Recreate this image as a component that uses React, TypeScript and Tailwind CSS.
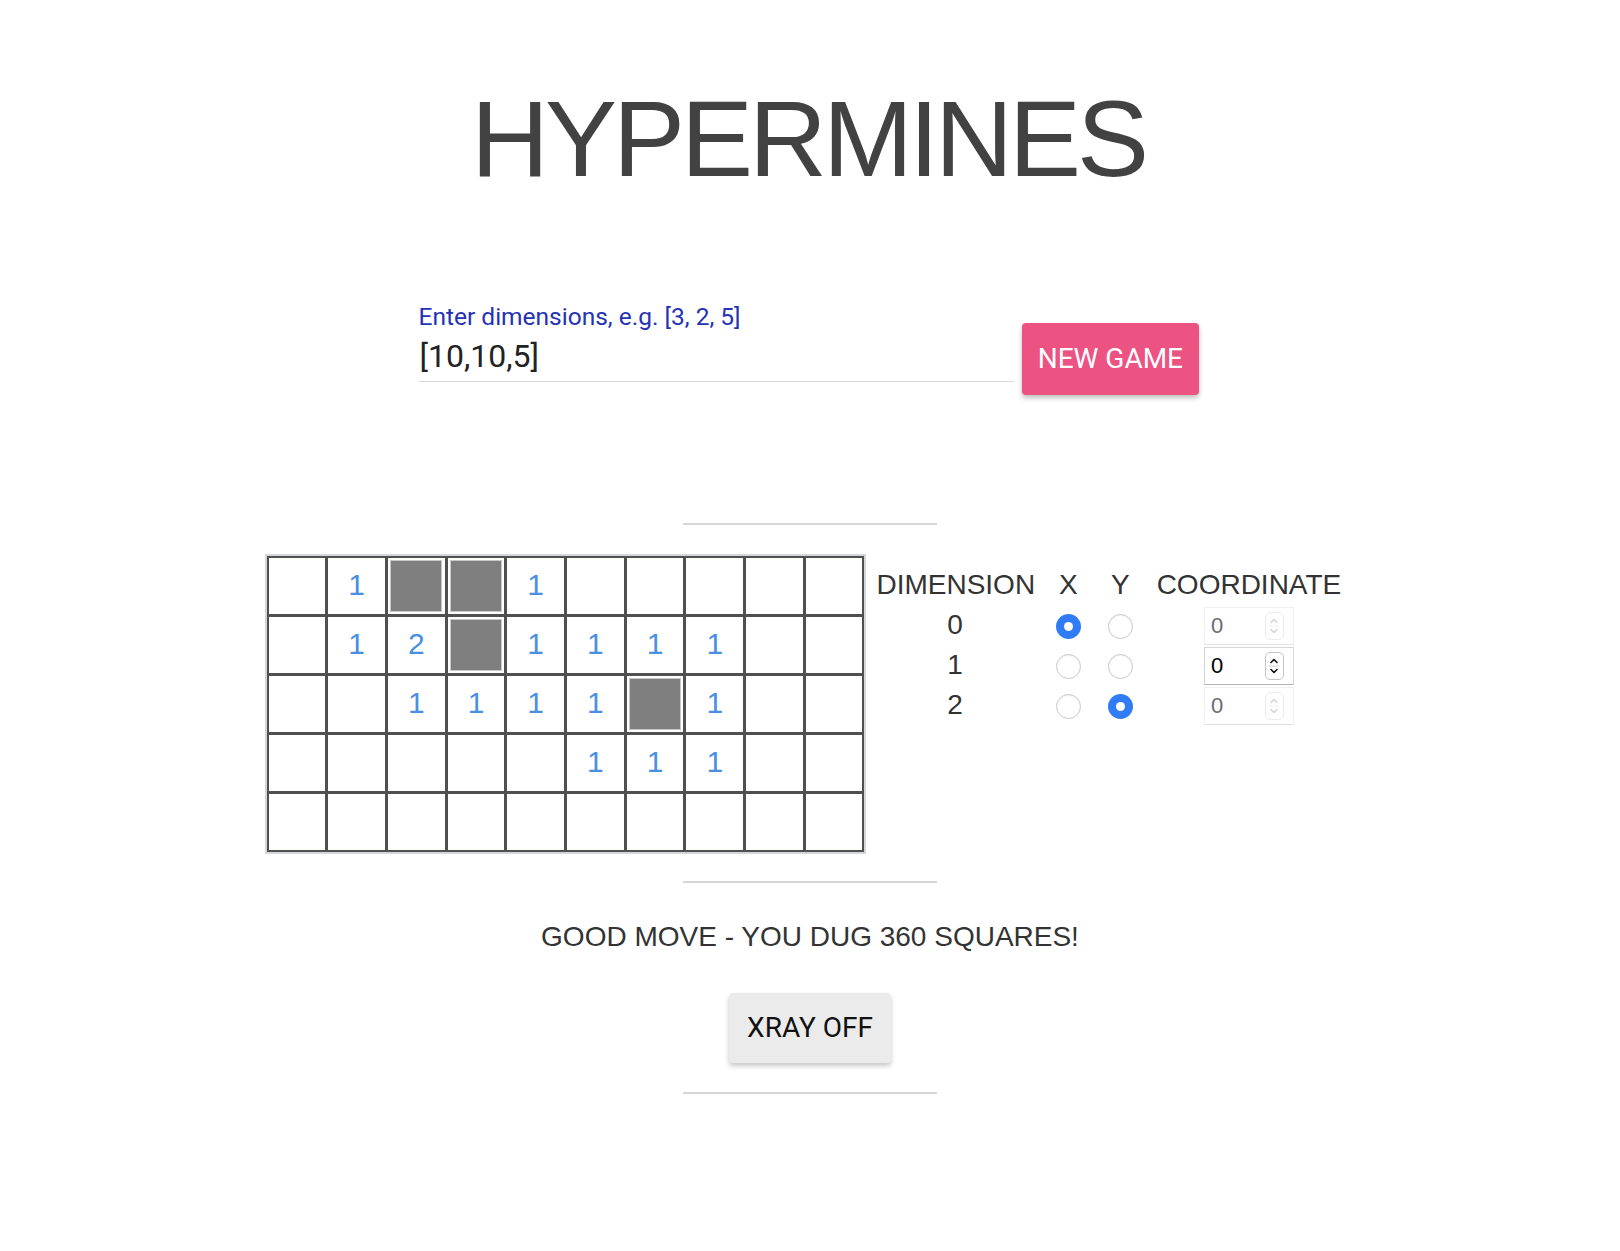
import React, { useState } from "react";

type Cell = number | "mine" | null;

// 10 x 5 slice of the board, as dug so far
const board: Cell[][] = [
  [null, 1, "mine", "mine", 1, null, null, null, null, null],
  [null, 1, 2, "mine", 1, 1, 1, 1, null, null],
  [null, null, 1, 1, 1, 1, "mine", 1, null, null],
  [null, null, null, null, null, 1, 1, 1, null, null],
  [null, null, null, null, null, null, null, null, null, null],
];

const Radio = ({ checked }: { checked: boolean }) =>
  checked ? (
    <span className="flex h-[25px] w-[25px] items-center justify-center rounded-full bg-[#2f7cf6]">
      <span className="h-[9px] w-[9px] rounded-full bg-white" />
    </span>
  ) : (
    <span className="block h-[25px] w-[25px] rounded-full border border-[#c9c9c9] bg-white shadow-[inset_0_1px_1px_rgba(0,0,0,0.06)]" />
  );

const Spinner = ({ disabled }: { disabled: boolean }) => (
  <span
    className={`flex h-[28px] w-[19px] flex-col items-center justify-center rounded-[5px] border ${
      disabled ? "border-[#ececec]" : "border-[#c4c4c4]"
    }`}
  >
    <svg width="10" height="22" viewBox="0 0 10 22" fill="none">
      <path
        d="M2 7.5 5 4.5 8 7.5"
        stroke={disabled ? "#d4d4d4" : "#111"}
        strokeWidth="1.6"
        strokeLinecap="round"
        strokeLinejoin="round"
      />
      <line x1="0" y1="11" x2="10" y2="11" stroke={disabled ? "#eee" : "#d0d0d0"} strokeWidth="1" />
      <path
        d="M2 14.5 5 17.5 8 14.5"
        stroke={disabled ? "#d4d4d4" : "#111"}
        strokeWidth="1.6"
        strokeLinecap="round"
        strokeLinejoin="round"
      />
    </svg>
  </span>
);

const CoordInput = ({ disabled }: { disabled: boolean }) => (
  <div
    className={`flex h-[38px] w-[90px] items-center justify-between bg-white pl-[6px] pr-[9px] ${
      disabled
        ? "border border-[#f0f0f0] border-b-[#e2e2e2]"
        : "border border-[#d6d6d6] border-b-[#b5b5b5]"
    }`}
  >
    <span className={`text-[22px] leading-none ${disabled ? "text-[#6b6b6b]" : "text-black"}`}>0</span>
    <Spinner disabled={disabled} />
  </div>
);

export default function App() {
  const [dims, setDims] = useState("[10,10,5]");
  const axes = [
    { dim: 0, x: true, y: false },
    { dim: 1, x: false, y: false },
    { dim: 2, x: false, y: true },
  ];

  return (
    <div className="flex min-h-[1251px] flex-col items-center bg-white font-['Liberation_Sans',Arial,sans-serif] text-[#333]">
      <h1 className="mt-[85px] pr-[4px] text-[108px] font-normal leading-none tracking-[-4px] text-[#424242]">
        HYPERMINES
      </h1>

      <div className="mt-[110px] flex w-[783px] items-start gap-[8px] pr-[3px] font-['Roboto',sans-serif]">
        <div className="flex w-[598px] flex-col">
          <label className="text-[24.5px] leading-[28px] text-[#2532b5]">Enter dimensions, e.g. [3, 2, 5]</label>
          <input
            value={dims}
            onChange={(e) => setDims(e.target.value)}
            className="h-[51px] w-full border-b border-[#d8d8d8] bg-transparent pl-[1px] text-[32px] text-[#222] outline-none"
          />
        </div>
        <button
          type="button"
          className="mt-[20px] h-[72px] w-[177px] rounded-[4px] bg-[#ec5282] text-[28px] font-normal text-white shadow-[0_3px_5px_rgba(0,0,0,0.25)]"
        >
          NEW GAME
        </button>
      </div>

      <div className="mt-[128px] h-[2px] w-[254px] bg-[#d6d6d6]" />

      <div className="mt-[29px] flex items-start gap-[10px] pr-[13px]">
        <div className="border-2 border-[#d3d7db]">
          <div className="grid grid-cols-[repeat(10,56.7px)] grid-rows-[repeat(5,56px)] gap-[3px] bg-[#505050] p-[2px]">
            {board.flatMap((row, r) =>
              row.map((cell, c) => (
                <div key={`${r}-${c}`} className="flex items-center justify-center bg-white">
                  {cell === "mine" ? (
                    <div className="m-[2px] h-[52px] w-[52px] border border-[#c8c8c8] bg-[#7f7f7f]" />
                  ) : cell !== null ? (
                    <span className="pb-[3px] text-[30px] leading-none text-[#4a90e2]">{cell}</span>
                  ) : null}
                </div>
              ))
            )}
          </div>
        </div>

        <div className="mt-[15px] grid grid-cols-[157px_70px_34px_205px] text-[28px] leading-[32px] text-[#333]">
          <div className="mb-[4px] text-center">DIMENSION</div>
          <div className="mb-[4px] text-center">X</div>
          <div className="mb-[4px] text-center">Y</div>
          <div className="mb-[4px] pl-[18px] text-center">COORDINATE</div>
          {axes.map((a) => (
            <React.Fragment key={a.dim}>
              <div className="flex h-[40px] items-center justify-center">{a.dim}</div>
              <div className="flex h-[40px] items-center justify-center pt-[2px]">
                <Radio checked={a.x} />
              </div>
              <div className="flex h-[40px] items-center justify-center pt-[2px]">
                <Radio checked={a.y} />
              </div>
              <div className="flex h-[40px] items-center justify-center pl-[18px] pt-[2px]">
                <CoordInput disabled={a.x || a.y} />
              </div>
            </React.Fragment>
          ))}
        </div>
      </div>

      <div className="mt-[27px] h-[2px] w-[254px] bg-[#d6d6d6]" />

      <p className="mt-[38px] text-[28px] leading-[32px] text-[#333]">GOOD MOVE - YOU DUG 360 SQUARES!</p>

      <button
        type="button"
        className="mt-[40px] h-[70px] w-[162px] rounded-[4px] bg-[#ebebeb] font-['Roboto',sans-serif] text-[28px] font-normal text-[#111] shadow-[0_3px_5px_rgba(0,0,0,0.22)]"
      >
        XRAY OFF
      </button>

      <div className="mt-[29px] h-[2px] w-[254px] bg-[#d6d6d6]" />
    </div>
  );
}
